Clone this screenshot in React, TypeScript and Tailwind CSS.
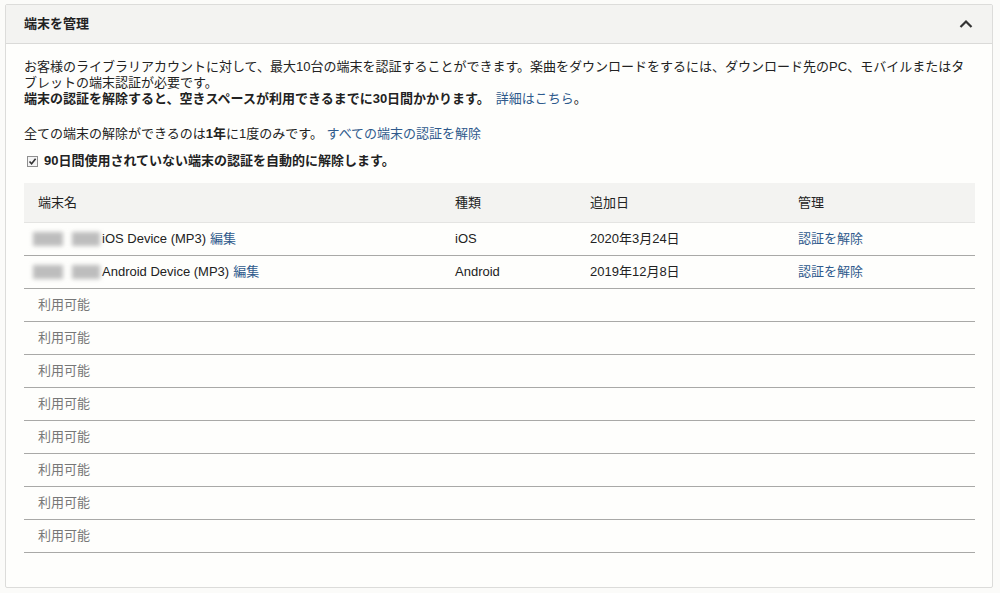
import React from 'react';

interface Device {
  name: string;
  kind: string;
  added: string;
}

const devices: Device[] = [
  { name: 'iOS Device (MP3)', kind: 'iOS', added: '2020年3月24日' },
  { name: 'Android Device (MP3)', kind: 'Android', added: '2019年12月8日' },
];

const emptySlots = 8;

// blurred owner name in front of the device name
function Blurred() {
  return (
    <span className="inline-flex items-center gap-[9px] w-[69px] h-[16px] align-middle">
      <span className="block w-[30px] h-[14px] bg-[#bdbdbd] blur-[2px]" />
      <span className="block w-[28px] h-[14px] bg-[#bdbdbd] blur-[2px]" />
    </span>
  );
}

export default function App() {
  return (
    <div
      className="min-h-[593px] w-[1000px] bg-[#fbfbf9] pt-[4px] pl-[5px] text-[13px] text-[#222]"
      style={{ fontFamily: '"Liberation Sans", "Noto Sans CJK JP", sans-serif' }}
    >
      <div className="w-[988px] h-[584px] border border-[#dcdcda] rounded-[2px] bg-[#fefefc]">
        {/* header */}
        <div className="flex items-center justify-between h-[39px] bg-[#f3f3f1] border-b border-[#dadad8] pl-[18px] pr-[17px]">
          <h2 className="font-bold text-[13px]">端末を管理</h2>
          <svg width="14" height="10" viewBox="0 0 14 10" className="mr-[2px]">
            <path d="M1.5 8 L7 2.5 L12.5 8" fill="none" stroke="#333" strokeWidth="2.2" />
          </svg>
        </div>

        <div className="pl-[18px] pr-[17px] pt-[15px]">
          <p className="leading-[16px]">
            お客様のライブラリアカウントに対して、最大10台の端末を認証することができます。楽曲をダウンロードをするには、ダウンロード先のPC、モバイルまたはタブレットの端末認証が必要です。
            <br />
            <span className="font-bold">端末の認証を解除すると、空きスペースが利用できるまでに30日間かかります。</span>
            <a className="ml-[6px] text-[#2f5a8c]">詳細はこちら</a>。
          </p>
          <p className="mt-[19px] leading-[16px]">
            全ての端末の解除ができるのは<span className="font-bold">1年</span>に1度のみです。{' '}
            <a className="text-[#2f5a8c]">すべての端末の認証を解除</a>
          </p>
          <label className="flex items-center mt-[11px] ml-[3px] leading-[16px] font-bold">
            <span className="flex items-center justify-center w-[11px] h-[11px] border border-[#8f8f8f] bg-[#f4f4f4] mr-[6px]">
              <svg width="9" height="9" viewBox="0 0 9 9">
                <path d="M1.5 4.5 L3.6 6.8 L7.6 1.8" fill="none" stroke="#333" strokeWidth="1.6" />
              </svg>
            </span>
            90日間使用されていない端末の認証を自動的に解除します。
          </label>

          {/* device table */}
          <div className="mt-[14px] w-[951px]">
            <div className="grid grid-cols-[417px_135px_208px_1fr] h-[40px] items-center bg-[#f3f3f1] border-b border-[#e4e4e2]">
              <div className="pl-[14px]">端末名</div>
              <div className="pl-[14px]">種類</div>
              <div className="pl-[14px]">追加日</div>
              <div className="pl-[14px]">管理</div>
            </div>
            {devices.map((d) => (
              <div
                key={d.name}
                className="grid grid-cols-[417px_135px_208px_1fr] h-[33px] items-center border-b border-[#a9a9a7]"
              >
                <div className="pl-[9px] flex items-center">
                  <Blurred />
                  <span>{d.name}</span>
                  <a className="ml-[4px] text-[#2f5a8c]">編集</a>
                </div>
                <div className="pl-[14px]">{d.kind}</div>
                <div className="pl-[14px]">{d.added}</div>
                <div className="pl-[14px]">
                  <a className="text-[#2f5a8c]">認証を解除</a>
                </div>
              </div>
            ))}
            {Array.from({ length: emptySlots }).map((_, i) => (
              <div key={i} className="flex items-center h-[33px] pl-[14px] border-b border-[#a9a9a7] text-[#777]">
                利用可能
              </div>
            ))}
          </div>
        </div>
      </div>
    </div>
  );
}
